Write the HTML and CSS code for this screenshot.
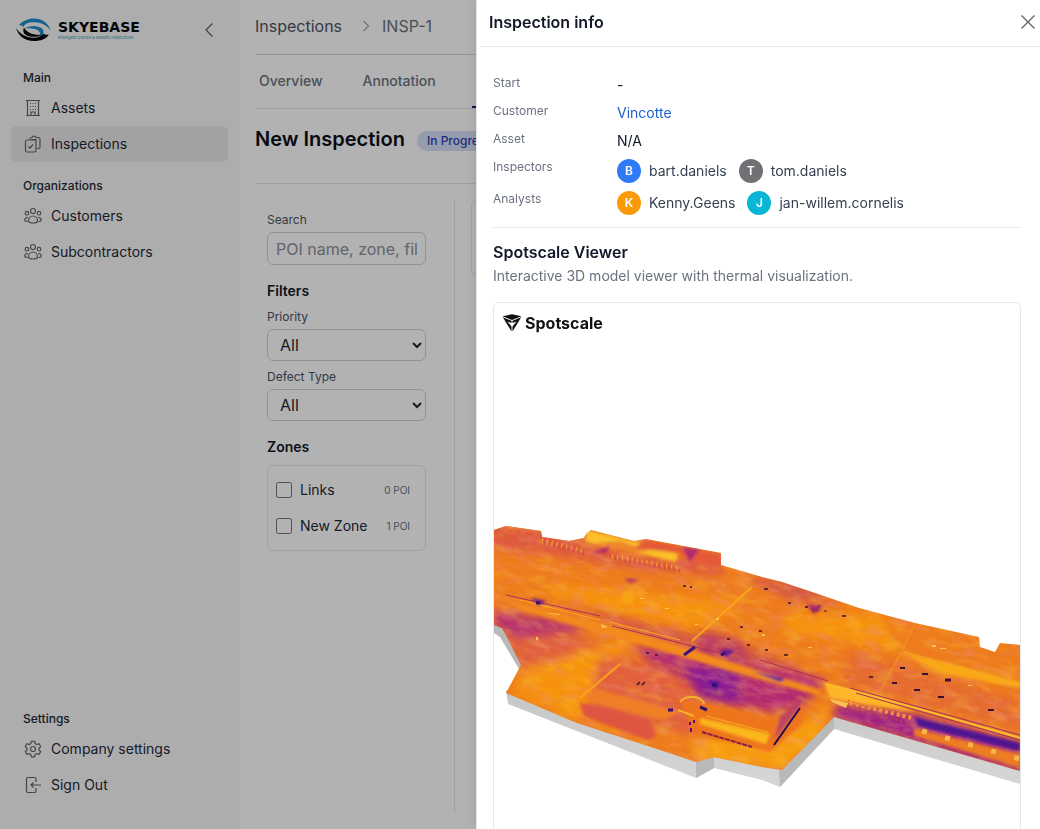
FILE: index.html
```html
<!DOCTYPE html>
<html lang="en">
<head>
<meta charset="utf-8">
<meta name="viewport" content="width=device-width, initial-scale=1">
<title>Skyebase – Inspection INSP-1</title>
<link rel="stylesheet" href="styles.css">
</head>
<body>
<div class="app">
  <aside class="sidebar">
    <div class="brand">
      <a class="logo" href="#" aria-label="Skyebase home">
        <svg class="logo-mark" viewBox="0 0 36 24" fill="none" aria-hidden="true">
          <path d="M3 7C9 0 21-2 29 4c3 2.500 5 5.500 6 9-3-4.500-8-8-14-8.500C14 3.800 9 5 7.500 9 6.500 8 5 7.300 3 7Z" fill="#1c8fd0"/>
          <path d="M9 10.500C13 7 22 7 26 10.500c3 3 2 6.500-2 8 1-3.500-1-6.500-5-7.500-3.500-.8-7-.8-10-.5Z" fill="#1c8fd0"/>
          <path d="M0 10c2 7 8 13 18 13 7 0 12-2 15-6.500-2 .5-4 .3-5.500-.7C24 19.500 18 20.500 12 19 6.500 17.500 3 14 0 10Z" fill="#05080b"/>
          <path d="M8 9.500c-2 4 0 8 6 9 4 .7 9 .3 12-2-4 .7-9 0-12.500-1.800C10.500 13 9 11.500 8 9.500Z" fill="#05080b"/>
        </svg>
        <span class="logo-words">
          <span class="logo-name">SKYEBASE</span>
          <span class="logo-tag">Intelligent Drones &amp; Robotic Inspections</span>
        </span>
      </a>
      <button class="icon-button" type="button" aria-label="Collapse menu">
        <svg width="10" height="16" viewBox="0 0 10 16" fill="none" stroke="currentColor" stroke-width="1.300"><path d="M8.500 1.500 2 8l6.500 6.500"/></svg>
      </button>
    </div>
    <nav class="menu" aria-label="Main menu">
      <h2 class="menu-title">Main</h2>
      <a class="menu-item" href="#"><svg class="icon" viewBox="0 0 18 18"><path d="M2 16.500h14M3.500 16.500v-15M14.500 16.500v-15M2 1.500h14M7 16.500V13h4v3.500M6 4.500h1M8.500 4.500h1M11 4.500h1M6 7.500h1M8.500 7.500h1M11 7.500h1M6 10.500h1M8.500 10.500h1M11 10.500h1"/></svg>Assets</a>
      <a class="menu-item active" href="#"><svg class="icon" viewBox="0 0 18 18"><path d="M6 4.500V4a1.500 1.500 0 0 1 1.500-1.500H8a2.200 2.200 0 0 1 4 0h2.500A1.500 1.500 0 0 1 16 4v8a1.500 1.500 0 0 1-1.500 1.500H13M7.500 4.500h5.500"/><rect x="1.500" y="5" width="10.500" height="12" rx="1.500"/><path d="m4.500 11.500 1.500 1.500 3-3.500"/></svg>Inspections</a>
      <h2 class="menu-title">Organizations</h2>
      <a class="menu-item" href="#"><svg class="icon" viewBox="0 0 18 18"><circle cx="9" cy="4" r="2.500"/><circle cx="3" cy="6.200" r="1.800"/><circle cx="15" cy="6.200" r="1.800"/><path d="M4.500 14c0-3 2-5 4.500-5s4.500 2 4.500 5c0 1.300-2 2-4.500 2s-4.500-.7-4.500-2ZM4 10.500c-2 0-3.200 1-3.200 2.500 0 1 1 1.500 2.700 1.500M14 10.500c2 0 3.200 1 3.200 2.500 0 1-1 1.500-2.700 1.500"/></svg>Customers</a>
      <a class="menu-item" href="#"><svg class="icon" viewBox="0 0 18 18"><circle cx="9" cy="4" r="2.500"/><circle cx="3" cy="6.200" r="1.800"/><circle cx="15" cy="6.200" r="1.800"/><path d="M4.500 14c0-3 2-5 4.500-5s4.500 2 4.500 5c0 1.300-2 2-4.500 2s-4.500-.7-4.500-2ZM4 10.500c-2 0-3.200 1-3.200 2.500 0 1 1 1.500 2.700 1.500M14 10.500c2 0 3.200 1 3.200 2.500 0 1-1 1.500-2.700 1.500"/></svg>Subcontractors</a>
    </nav>
    <nav class="menu menu-bottom" aria-label="Settings menu">
      <h2 class="menu-title">Settings</h2>
      <a class="menu-item" href="#"><svg class="icon" viewBox="0 0 18 18"><circle cx="9" cy="9" r="2.500"/><path d="M7.400 1.300h3.200l.6 2.300 1.600.9 2.300-.7 1.600 2.800-1.700 1.600v1.700l1.700 1.600-1.600 2.800-2.300-.7-1.600.9-.6 2.300H7.400l-.6-2.300-1.600-.9-2.300.7-1.600-2.800L3 9.900V8.200L1.300 6.600l1.600-2.800 2.300.7 1.600-.9Z"/></svg>Company settings</a>
      <a class="menu-item" href="#"><svg class="icon" viewBox="0 0 18 18"><path d="M12 6V3a1.500 1.500 0 0 0-1.500-1.500H4A1.500 1.500 0 0 0 2.500 3v12A1.500 1.500 0 0 0 4 16.500h6.500A1.500 1.500 0 0 0 12 15v-3M17 9H7M9.500 6.500 7 9l2.500 2.500"/></svg>Sign Out</a>
    </nav>
  </aside>

  <main class="page">
    <nav class="crumbs" aria-label="Breadcrumb">
      <a href="#">Inspections</a>
      <svg width="8" height="12" viewBox="0 0 8 12" fill="none" stroke="#9ca3af" stroke-width="1.200" aria-hidden="true"><path d="m1.500 1 5 5-5 5"/></svg>
      <span class="crumb-current">INSP-1</span>
    </nav>
    <nav class="tabs" aria-label="Inspection sections">
      <a class="tab" href="#">Overview</a>
      <a class="tab" href="#">Annotation</a>
      <a class="tab selected" href="#" aria-label="Points of interest"></a>
    </nav>
    <header class="page-head">
      <h1>New Inspection</h1>
      <span class="badge">In Progress</span>
    </header>
    <div class="workspace">
      <form class="filters">
        <label class="label" for="search">Search</label>
        <input class="control search" id="search" type="text" placeholder="POI name, zone, file name">
        <h2 class="group-title">Filters</h2>
        <label class="label" for="priority">Priority</label>
        <select class="control" id="priority"><option>All</option></select>
        <label class="label" for="defect">Defect Type</label>
        <select class="control" id="defect"><option>All</option></select>
        <h2 class="group-title zones-title">Zones</h2>
        <div class="zones">
          <div class="zone"><input type="checkbox" id="z1"><label for="z1">Links</label><span class="count">0 POI</span></div>
          <div class="zone"><input type="checkbox" id="z2"><label for="z2">New Zone</label><span class="count">1 POI</span></div>
        </div>
      </form>
      <section class="results" aria-label="Results"><div class="result-card"></div></section>
    </div>
  </main>
</div>

<div class="overlay">
  <section class="drawer" role="dialog" aria-labelledby="drawer-title">
    <header class="drawer-head">
      <h2 id="drawer-title">Inspection info</h2>
      <button class="icon-button" type="button" aria-label="Close">
        <svg width="16" height="16" viewBox="0 0 16 16" fill="none" stroke="currentColor" stroke-width="1.400"><path d="m1.500 1.500 13 13M14.500 1.500l-13 13"/></svg>
      </button>
    </header>
    <div class="drawer-body">
      <dl class="facts">
        <dt>Start</dt><dd>-</dd>
        <dt>Customer</dt><dd><a href="#">Vincotte</a></dd>
        <dt>Asset</dt><dd>N/A</dd>
        <dt>Inspectors</dt>
        <dd class="people"><span class="avatar blue">B</span><span class="person">bart.daniels</span><span class="avatar gray">T</span><span class="person">tom.daniels</span></dd>
        <dt>Analysts</dt>
        <dd class="people"><span class="avatar orange">K</span><span class="person">Kenny.Geens</span><span class="avatar cyan">J</span><span class="person">jan-willem.cornelis</span></dd>
      </dl>
      <h3 class="viewer-title">Spotscale Viewer</h3>
      <p class="viewer-note">Interactive 3D model viewer with thermal visualization.</p>
      <div class="viewer">
        <div class="viewer-brand">
          <svg width="20" height="18" viewBox="0 0 20 18" fill="#111" aria-hidden="true"><path d="M.5 2.200 10 .3l9.500 1.900L10 6ZM.8 3.200l8.700 3.600v2.200L5.500 7.600l4 5V17.600ZM19.200 3.200l-8.700 3.600v2.200l4-1.400-4 5V17.600Z"/></svg>
          <span>Spotscale</span>
        </div>
        <svg class="scene" viewBox="494 342 526 520" role="img" aria-label="Thermal 3D model">
          <defs>
            <clipPath id="top"><path d="M494 530 506 526 541 531 542 537 569 541 584 538 586 534 591 530 634 541 646 539 721 553V565L762 577 782 582 815 593 859 608 915 623 979 637 980 647 995 652 1000 643 1020 645V771L834 717 782 770 762 767 714 757 696 762 654 748 577 723 506 693 521 665 507 637 502 628 494 625Z"/></clipPath>
            <filter id="soft" x="-20%" y="-20%" width="140%" height="140%"><feGaussianBlur stdDeviation="4"/></filter>
            <filter id="soft2" x="-20%" y="-20%" width="140%" height="140%"><feGaussianBlur stdDeviation="1.500"/></filter>
            <filter id="mottle" x="0" y="0" width="100%" height="100%"><feTurbulence type="fractalNoise" baseFrequency=".05 .12" numOctaves="4" seed="8"/><feColorMatrix values="0 0 0 0 .84  0 0 0 0 .28  0 0 0 0 .28  2.600 0 0 0 -1.200"/></filter>
            <filter id="glow" x="0" y="0" width="100%" height="100%"><feTurbulence type="fractalNoise" baseFrequency=".05 .12" numOctaves="4" seed="21"/><feColorMatrix values="0 0 0 0 .98  0 0 0 0 .62  0 0 0 0 .05  3 0 0 0 -1.400"/></filter>
            <linearGradient id="wall" x1="0" y1="0" x2="0" y2="1"><stop offset="0" stop-color="#c6c6c6"/><stop offset="1" stop-color="#d6d6d6"/></linearGradient>
          </defs>
          <path fill="url(#wall)" d="M506 690 508 704 696 778 714 768 762 780 780 787 834 729 1020 784V768L834 714 780 768 714 754 696 759 577 720Z"/>
          <path fill="#b9b9b9" d="M696 760 714 755V768L696 778ZM779 770 834 715V729L780 787ZM494 624 503 628 522 664 519 669 500 637 494 633Z"/>
          <g clip-path="url(#top)">
            <path fill="#ee7c1c" d="M490 520H1024V790H490Z"/>
            <g filter="url(#soft)">
              <path fill="#de5a3c" d="M490 522 545 530 640 556 725 560 722 576 640 570 540 554 490 550Z"/>
              <path fill="#e0603a" d="M494 606 560 622 600 645 522 672 496 632Z"/>
              <path fill="#b32c72" d="M494 612 540 616 590 628 550 634 520 638 494 626Z" opacity=".9"/>
              <path fill="#f6920f" d="M560 584 640 592 740 602 700 630 620 615 540 590ZM790 615 880 612 900 650 780 632ZM524 668 630 638 590 700 578 722 512 692Z"/>
              <path fill="#f79c0b" d="M690 740 790 730 830 706 820 740 780 770 700 760Z"/>
              <path fill="#e2603a" d="M600 656 680 665 720 690 690 735 590 704Z"/>
            </g>
            <g filter="url(#soft)">
              <path fill="#b32c72" d="M632 646 690 650 826 680 804 706 772 712 716 704 700 686 650 662Z"/>
              <path fill="#8c1a92" d="M682 670 735 662 742 702 700 698Z"/>
              <path fill="#c8475a" d="M560 602 640 622 760 650 830 682 760 664 640 634ZM740 574 800 584 840 604 790 600Z" opacity=".7"/>
              <path fill="#b3346a" d="M700 630 740 640 750 660 700 652Z" opacity=".8"/>
              <path fill="#a02184" d="M836 704 915 714 1020 742V774L834 718Z"/>
              <path fill="#e0603a" d="M850 650 1020 700V730L840 685Z" opacity=".6"/>
            </g>
            <g opacity=".45"><g transform="rotate(14 757 640)">
              <rect x="440" y="440" width="640" height="420" filter="url(#mottle)" opacity=".8"/>
              <rect x="440" y="440" width="640" height="420" filter="url(#glow)" opacity=".6"/>
            </g></g>
            <g filter="url(#soft2)">
              <path fill="#fbc02a" d="M586 530 636 542 678 554 676 562 634 552 586 542Z"/>
              <path fill="#e8702c" d="M596 543 620 541 650 551 630 553Z" opacity=".7"/>
              <path fill="#e45a38" d="M646 540 721 554V567L690 562 680 553 634 548Z"/>
              <path fill="#fdb62a" d="M824 683 880 696 915 712 850 702 830 698Z"/>
              <path fill="#f28a1b" d="M506 600 620 628 700 652 822 690 820 696 726 670 620 638 520 610Z"/>
              <path fill="#f9a818" d="M900 652 960 666 1020 682V688L940 673Z"/>
              <path fill="#ee741f" d="M680 700 702 702 776 720 804 702 802 724 770 752 694 734Z"/>
              <path fill="#a8307a" d="M780 716 802 699 801 706 774 740Z" opacity=".7"/>
              <path fill="#fbb71e" d="M700 718 770 734 766 744 700 724Z"/>
              <path fill="#de5543" d="M580 703 600 706 650 720 656 736 648 740 584 716Z"/>
              <path fill="#ee7f26" d="M584 694 600 690 680 712 664 720 592 702Z"/>
              <path fill="#b02b70" d="M594 553 610 545 606 553ZM624 578 640 580 630 583ZM682 547 700 549 690 562ZM806 604 824 606 814 614Z"/>
              <path fill="#4d128f" d="M914 717 1020 743V751L918 726Z"/>
              <path fill="#ed7c23" d="M914 728 1020 754V768L914 736Z"/>
              <path fill="#5a169a" d="M530 598 546 601 540 606ZM720 650 735 650 726 657ZM708 680 720 682 716 692ZM752 671 786 679 780 682Z"/>
              <ellipse cx="628" cy="597" rx="7" ry="7" fill="#f8a219"/>
            </g>
            <g fill="none">
              <path stroke="#f9a31a" stroke-width="2" d="M752 587 692 641M620 664 580 698"/>
              <path stroke="#f6961c" d="M915 624 900 654 876 700"/>
              <path stroke="#f9a824" stroke-width="1" d="M520 600 600 620M610 622 680 640M706 716 768 732M904 652 1020 684"/>
              <path stroke="#fcbc2c" stroke-width="2" d="M826 684 880 698 930 712 1020 738"/>
              <path stroke="#a8305f" stroke-width="1" d="M506 595 600 616M612 626 716 652M760 660 828 681M850 688 1020 735M856 693 1020 740"/>
              <path stroke="#f7ac30" stroke-width="4" stroke-dasharray="1 4" d="M542 540 584 551M612 556 680 568"/>
              <path stroke="#c24a4a" stroke-width="3" stroke-dasharray="1 4" d="M544 543 586 554M615 559 682 571"/>
              <path stroke="#f7903b" stroke-width="4" stroke-dasharray="3 3" d="M850 703 912 718"/>
              <path stroke="#d0552f" stroke-width="1" stroke-dasharray="2 3" d="M852 708 912 724M848 700 870 708"/>
              <path stroke="#fbb548" stroke-width="5" stroke-dasharray="5 19" d="M922 731 1020 759"/>
              <path stroke="#f7b12d" stroke-width="2" d="M680 702C686 694 702 696 704 704M678 710 694 716"/>
              <path stroke="#8c1c40" stroke-width="2" stroke-dasharray="5 1" d="M702 732 752 747"/>
              <path stroke="#250b4d" stroke-width="2" d="M800 708 774 745"/>
              <path stroke="#3d117e" stroke-width="3" d="M684 655 695 647"/>
              <path stroke="#5a1277" stroke-width="2" d="M690 722v3M694 720v3M691 728v4"/>
            </g>
            <g stroke="#3a102d" stroke-width="1.500" fill="none">
              <path d="M764 589h4M788 603h3M805 607h3M842 616h4M740 627h3M759 631h3M765 650h3M784 655h4M727 639h3M747 645h3M869 677h4M646 653h3M655 655h3M637 685l3-3M642 685l3-3M683 586h3M690 587h2"/>
              <path d="M900 668h5M922 674h6M892 683h5M914 690h6M938 697h6M988 710h6" stroke-width="2"/>
              <path d="M945 680h6" stroke-width="3"/>
              <path d="M813 612 820 605M811 609 819 611M824 611h3" stroke="#8d2a62"/>
              <path d="M700 707l7 3M668 710h5M536 603h4M712 685h5M721 655l4-2" stroke="#32106f" stroke-width="3"/>
            </g>
            <g fill="#fec052"><path d="M536 637h2v3h-2ZM548 613 560 614V615L549 614ZM716 618h3v2h-3ZM695 624h3v1h-3ZM808 647h4v1h-4ZM762 634h3v2h-3ZM601 624 608 627 602 628ZM830 699 848 703 846 708 832 702ZM932 645h4v2h-4ZM940 648h6v1h-6ZM640 598h4v1h-4ZM665 608h4v1h-4ZM968 685h4v1h-4Z"/></g>
          </g>
        </svg>
      </div>
    </div>
  </section>
</div>
</body>
</html>
```

FILE: styles.css
```css
* { box-sizing: border-box; }

body {
  margin: 0;
  height: 100vh;
  overflow: hidden;
  background: #fff;
  color: #1f2937;
  font: 14px/20px Inter, "Liberation Sans", sans-serif;
}

h1, h2, h3, p, dl, dd { margin: 0; }
a { color: inherit; text-decoration: none; }

.app {
  display: grid;
  grid-template-columns: 240px minmax(0, 1fr);
  height: 100vh;
}

.icon-button {
  display: grid;
  place-items: center;
  width: 24px;
  height: 24px;
  padding: 0;
  border: 0;
  background: none;
  color: #666;
}

/* Sidebar */
.sidebar {
  display: flex;
  flex-direction: column;
  padding: 12px 12px 26px 11px;
  background: #f8f8f8;
}
.brand {
  display: flex;
  align-items: center;
  justify-content: space-between;
  height: 36px;
  padding: 0 7px 0 5px;
}
.logo { display: flex; align-items: center; gap: 6px; }
.logo-mark { width: 36px; height: 24px; }
.logo-words { display: flex; flex-direction: column; }
.logo-name {
  color: #05080b;
  font: 700 14px/16px "DejaVu Sans", sans-serif;
}
.logo-tag {
  color: #2a93b5;
  font-size: 4px;
  line-height: 6px;
  white-space: nowrap;
}
.menu { padding-top: 6px; }
.menu-title {
  height: 36px;
  padding: 14px 12px 2px;
  font-size: 12px;
  font-weight: 500;
  line-height: 20px;
}
.menu-bottom { margin-top: auto; }
.menu-item {
  display: flex;
  align-items: center;
  gap: 9px;
  height: 36px;
  padding: 0 13px;
  border-radius: 6px;
}
.menu-item.active { background: #e9e9e9; }
.icon {
  width: 18px;
  height: 18px;
  fill: none;
  stroke: #666;
  stroke-width: 1.2;
}

/* Page */
.page {
  display: flex;
  flex-direction: column;
  padding: 0 15px 16px;
}
.crumbs {
  display: flex;
  align-items: center;
  gap: 12px;
  height: 55px;
  padding-bottom: 2px;
  border-bottom: 1px solid #d9d9d9;
  color: #4b5563;
  font-size: 16px;
}
.crumbs svg { margin-left: 8px; }
.crumb-current { color: #6b7280; }
.tabs {
  display: flex;
  gap: 32px;
  height: 54px;
  border-bottom: 1px solid #e5e5e5;
}
.tab {
  padding: 16px 4px;
  color: #6b7280;
  font-weight: 500;
}
.tab.selected {
  width: 80px;
  border-bottom: 2px solid #1e1b8a;
}
.page-head {
  display: flex;
  align-items: flex-start;
  gap: 12px;
  height: 75px;
  padding-top: 18px;
  border-bottom: 1px solid #e5e5e5;
}
.page-head h1 {
  color: #0b0f19;
  font-size: 20px;
  font-weight: 600;
  line-height: 24px;
}
.badge {
  margin-top: 4px;
  padding: 0 10px;
  border-radius: 10px;
  background: #d5e0f8;
  color: #3440b4;
  font-size: 12px;
  font-weight: 500;
}
.workspace {
  display: grid;
  grid-template-columns: 200px minmax(0, 1fr);
  gap: 16px;
  flex: 1;
  padding-top: 16px;
}
.filters {
  padding: 10px 28px 0 12px;
  border-right: 1px solid #e5e5e5;
}
.label {
  display: block;
  color: #4b5563;
  font-size: 12px;
}
.control {
  display: block;
  width: 100%;
  height: 32px;
  margin: 2px 0 6px;
  padding: 0 8px;
  border: 1px solid #cfd2d6;
  border-radius: 6px;
  background: #fff;
  color: #1f2937;
  font: 16px/20px Inter, "Liberation Sans", sans-serif;
}
.search {
  height: 33px;
  margin-bottom: 16px;
}
.search::placeholder { color: #8b919b; }
.group-title {
  margin-bottom: 6px;
  color: #111827;
  font-size: 14px;
  font-weight: 600;
}
.zones-title { margin: 16px 0 8px; }
.zones {
  padding: 6px 15px 6px 8px;
  border: 1px solid #e8e8e8;
  border-radius: 6px;
}
.zone {
  display: flex;
  align-items: center;
  gap: 8px;
  height: 36px;
}
.zone input {
  width: 16px;
  height: 16px;
  margin: 0;
}
.count {
  margin-left: auto;
  color: #6b7280;
  font-size: 10px;
}
.result-card {
  height: 76px;
  border: 1px solid #ebebeb;
  border-radius: 6px;
}

/* Drawer */
.overlay {
  position: fixed;
  inset: 0;
  display: flex;
  justify-content: flex-end;
  background: rgba(0, 0, 0, .3);
}
.drawer {
  width: calc(100% - 476px);
  min-width: 320px;
  overflow: hidden;
  border-left: 1px solid #e5e5e5;
  background: #fff;
  box-shadow: 0 0 12px rgba(0, 0, 0, .12);
}
.drawer-head {
  display: flex;
  align-items: center;
  justify-content: space-between;
  height: 47px;
  margin-left: 3px;
  padding: 0 0 3px 9px;
  border-bottom: 1px solid #e5e7eb;
}
.drawer-head h2 {
  color: #111827;
  font-size: 16px;
  font-weight: 600;
}
.drawer-body { padding: 26px 19px 0 16px; }
.facts {
  display: grid;
  grid-template-columns: 112px minmax(0, 1fr);
  gap: 8px 12px;
  padding-bottom: 14px;
  border-bottom: 1px solid #e5e7eb;
}
.facts dt {
  color: #6b7280;
  font-size: 12px;
}
.facts dd {
  height: 20px;
  padding-top: 2px;
  color: #111827;
}
.facts a { color: #1d5fd0; }
.facts .people {
  display: flex;
  align-items: center;
  gap: 8px;
  height: 24px;
  padding-top: 4px;
}
.facts .person { color: #374151; }
.facts .person + .avatar { margin-left: 4px; }
.avatar {
  display: grid;
  flex: none;
  place-items: center;
  width: 24px;
  height: 24px;
  border-radius: 50%;
  color: #fff;
  font-size: 12px;
  font-weight: 600;
}
.blue { background: #2f7bf6; }
.gray { background: #717175; }
.orange { background: #fb9a06; }
.cyan { background: #08b6d5; }
.viewer-title {
  margin-top: 12px;
  color: #111827;
  font-size: 16px;
  font-weight: 600;
  line-height: 24px;
}
.viewer-note { margin: 2px 0 16px; color: #6b7280; }
.viewer {
  border: 1px solid #e5e7eb;
  border-radius: 6px;
}
.viewer-brand {
  display: flex;
  align-items: center;
  gap: 3px;
  height: 39px;
  padding-left: 8px;
  color: #111;
  font-size: 16px;
  font-weight: 700;
}
.scene { display: block; width: 100%; }
```
